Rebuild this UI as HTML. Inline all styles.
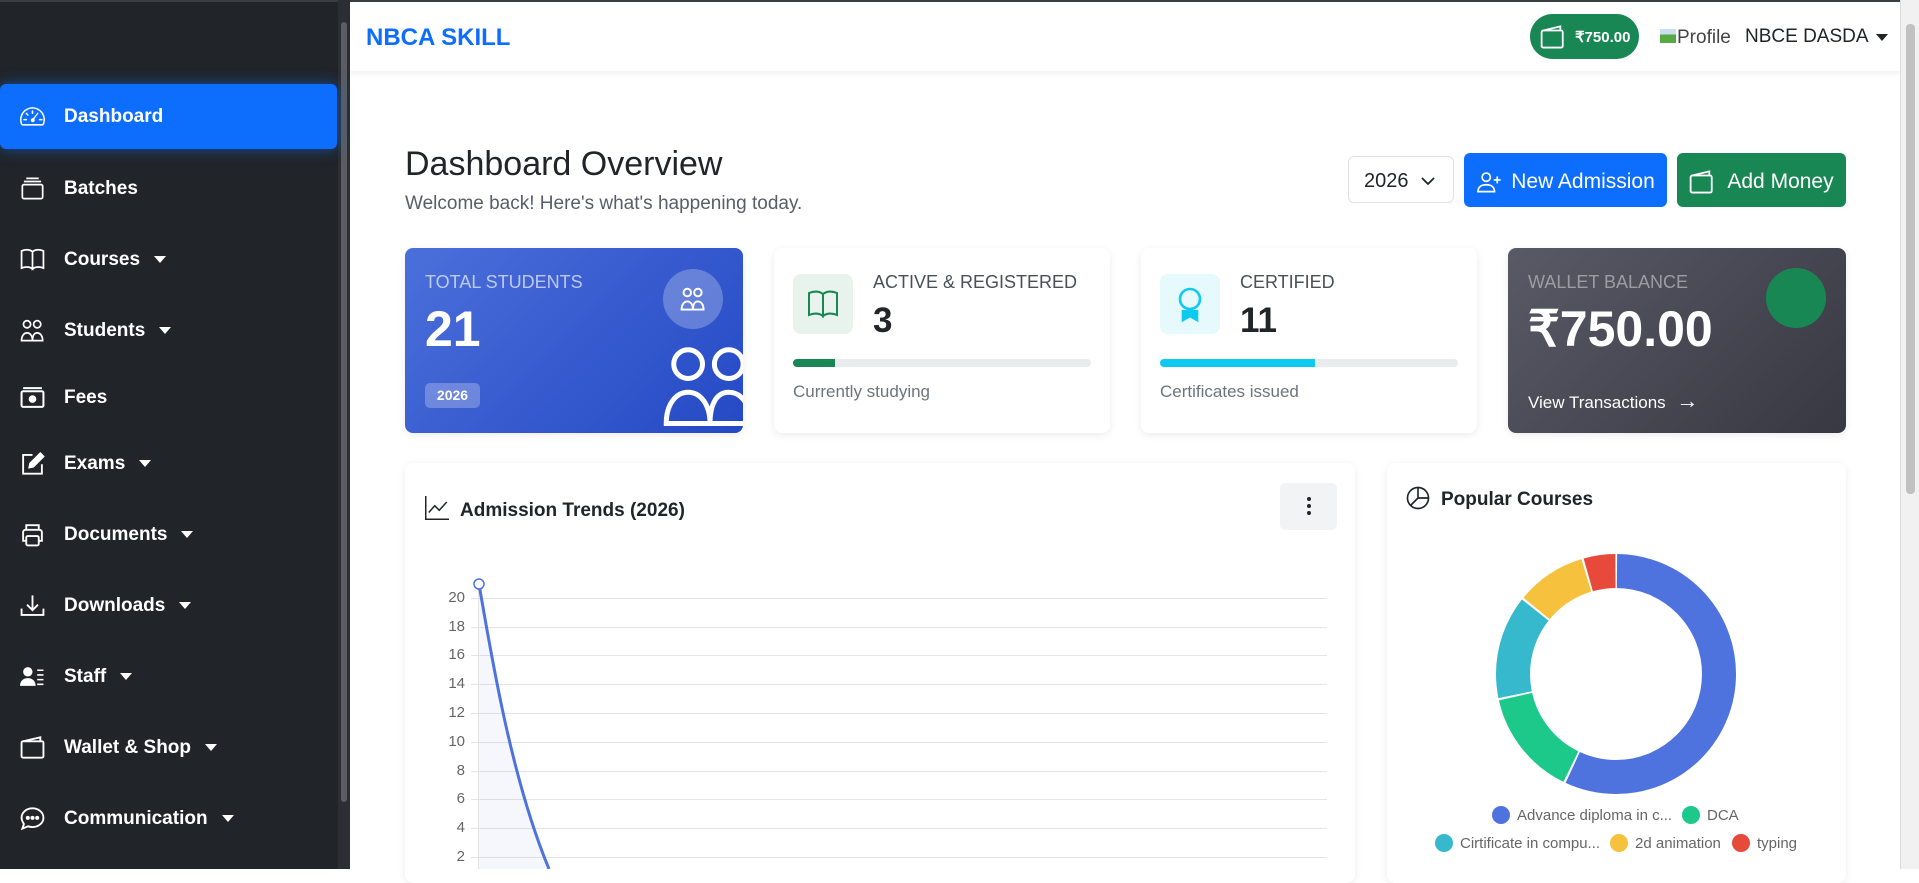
<!DOCTYPE html>
<html><head><meta charset="utf-8"><style>
*{box-sizing:border-box;margin:0;padding:0}
body{width:1919px;height:869px;overflow:hidden;background:#fff;font-family:"Liberation Sans",sans-serif;position:relative}
.sb{position:absolute;left:0;top:0;width:350px;height:869px;background:#212529;border-top:2px solid #3a3d42}
.sbs{position:absolute;left:338px;top:0;width:12px;height:869px;background:#2b2e33}
.sbs i{position:absolute;left:3px;top:22px;width:6px;height:780px;background:#5a5d62;border-radius:3px}
.item{position:absolute;left:0;width:337px;height:65px;color:#fff;font-size:19px;font-weight:bold;display:flex;align-items:center;padding-left:20px}
.item svg{width:25px;height:25px;margin-right:19px;flex:none}
.item.active{background:#0d6efd;border-radius:6px;box-shadow:0 0 14px rgba(13,110,253,.55)}
.car{display:inline-block;width:0;height:0;border-left:6px solid transparent;border-right:6px solid transparent;border-top:7px solid #fff;margin-left:14px}
.hdr{position:absolute;left:350px;top:0;width:1550px;height:71px;background:#fff;border-top:2px solid #3a3d42;box-shadow:0 2px 6px rgba(0,0,0,.07)}
.rsb{position:absolute;left:1900px;top:0;width:19px;height:869px;background:#f1f1f1;border-left:1px solid #ddd}
.rsb i{position:absolute;left:5px;top:24px;width:9px;height:470px;background:#c1c1c1;border-radius:4px}
.card{position:absolute;background:#fff;border-radius:8px;box-shadow:0 2px 8px rgba(0,0,0,.08)}
.lbl{position:absolute;font-size:18px;color:#495057}
.num{position:absolute;font-weight:bold;color:#212529}
.bar{position:absolute;height:8px;background:#e9ecef;border-radius:4px;overflow:hidden}
.bar i{display:block;height:100%}
.sub{position:absolute;font-size:17px;color:#6c757d}
.btn{position:absolute;border-radius:6px;color:#fff;font-size:21px;display:flex;align-items:center;justify-content:center}
.lg{position:absolute;font-size:15px;color:#666;display:flex;align-items:center}
.lg b{width:18px;height:18px;border-radius:50%;display:inline-block;margin-right:7px}
.yl{position:absolute;left:440px;width:25px;text-align:right;font-size:15px;color:#666}
.gl{position:absolute;left:471px;width:856px;height:1px;background:#e5e5e5}
</style></head><body>
<div class="sb"></div>
<div class="sbs"><i></i></div>

<div class="item active" style="top:84px"><svg viewBox="0 0 16 16" fill="#fff"><path d="M8 4a.5.5 0 0 1 .5.5V6a.5.5 0 0 1-1 0V4.5A.5.5 0 0 1 8 4M3.7 5.7a.5.5 0 0 1 .7 0l.9.9a.5.5 0 1 1-.7.7l-.9-.9a.5.5 0 0 1 0-.7M2 10a.5.5 0 0 1 .5-.5H4a.5.5 0 0 1 0 1H2.5A.5.5 0 0 1 2 10m9.6-4.5a.4.4 0 0 1 .1.6l-2.5 3.5a1.3 1.3 0 1 1-.8-.5l2.7-3.4a.4.4 0 0 1 .5-.2M12 10a.5.5 0 0 1 .5-.5H14a.5.5 0 0 1 0 1h-1.5A.5.5 0 0 1 12 10"/><path d="M0 10a8 8 0 1 1 15.5 2.8 1.5 1.5 0 0 1-1.4 1H1.9a1.5 1.5 0 0 1-1.4-1A8 8 0 0 1 0 10m8-7a7 7 0 0 0-6.6 9.4.5.5 0 0 0 .5.4h12.2a.5.5 0 0 0 .5-.4A7 7 0 0 0 8 3"/></svg>Dashboard</div>
<div class="item" style="top:156px"><svg viewBox="0 0 16 16" fill="none" stroke="#fff" stroke-width="1.1"><rect x="1.5" y="5.5" width="13" height="9" rx="1"/><path d="M2.5 3.5h11M4 1.5h8"/></svg>Batches</div>
<div class="item" style="top:227px"><svg viewBox="0 0 16 16" fill="none" stroke="#fff" stroke-width="1.1"><path d="M1 2.5c2.5-1 5-1 7 .5v11c-2-1.5-4.5-1.5-7-.5zM15 2.5c-2.5-1-5-1-7 .5v11c2-1.5 4.5-1.5 7-.5z"/></svg>Courses<span class="car"></span></div>
<div class="item" style="top:298px"><svg viewBox="0 0 16 16" fill="none" stroke="#fff" stroke-width="1.1"><circle cx="4.5" cy="4" r="2.3"/><circle cx="11" cy="4" r="2.3"/><path d="M1 14.5c0-3 1.5-5 3.5-5s3.5 2 3.5 5zM8 14.5c0-3 1-5 3-5s3.5 2 3.5 5z"/></svg>Students<span class="car"></span></div>
<div class="item" style="top:365px"><svg viewBox="0 0 16 16" fill="none" stroke="#fff" stroke-width="1.3"><rect x="1" y="4" width="14" height="10" rx="1"/><path d="M2 2h12"/><circle cx="8" cy="9" r="1.8" fill="#fff"/></svg>Fees</div>
<div class="item" style="top:431px"><svg viewBox="0 0 16 16" fill="none" stroke="#fff" stroke-width="1.2"><path d="M8 2.5H2v12h12v-6"/><path d="M13 1.5l2 2-6.5 6.5-2.5.5.5-2.5z" fill="#fff"/></svg>Exams<span class="car"></span></div>
<div class="item" style="top:502px"><svg viewBox="0 0 16 16" fill="none" stroke="#fff" stroke-width="1.2"><path d="M4 5V2h8v3M4 12H2V6.5A1.5 1.5 0 0 1 3.5 5h9A1.5 1.5 0 0 1 14 6.5V12h-2"/><rect x="4" y="9" width="8" height="6" rx="1"/></svg>Documents<span class="car"></span></div>
<div class="item" style="top:573px"><svg viewBox="0 0 16 16" fill="none" stroke="#fff" stroke-width="1.2"><path d="M1 10v4h14v-4M8 1.5v9M4.5 7.5 8 11l3.5-3.5"/></svg>Downloads<span class="car"></span></div>
<div class="item" style="top:644px"><svg viewBox="0 0 16 16" fill="#fff"><circle cx="5" cy="5" r="3"/><path d="M0 14c0-3 2-5 5-5s5 2 5 5z"/><path d="M11 4h4M11 7h4M11 10h4M11 13h4" stroke="#fff" stroke-width="1"/></svg>Staff<span class="car"></span></div>
<div class="item" style="top:715px"><svg viewBox="0 0 16 16" fill="none" stroke="#fff" stroke-width="1.2"><rect x="1" y="4" width="14" height="10.5" rx="1"/><path d="M2 4 13 1.5V4"/></svg>Wallet &amp; Shop<span class="car"></span></div>
<div class="item" style="top:786px"><svg viewBox="0 0 16 16" fill="none" stroke="#fff" stroke-width="1.2"><path d="M8 1.5c3.9 0 7 2.7 7 6s-3.1 6-7 6c-1 0-2-.2-2.8-.5L1.5 14.5l1-3C1.8 10.4 1 9 1 7.5c0-3.3 3.1-6 7-6z"/><circle cx="5" cy="7.6" r=".7" fill="#fff"/><circle cx="8" cy="7.6" r=".7" fill="#fff"/><circle cx="11" cy="7.6" r=".7" fill="#fff"/></svg>Communication<span class="car"></span></div>

<div class="hdr">
 <div style="position:absolute;left:16px;top:22px;font-size:24px;font-weight:bold;color:#0d6efd">NBCA SKILL</div>
 <div style="position:absolute;left:1180px;top:12px;width:109px;height:45px;border-radius:23px;background:#198754;color:#fff;font-size:15px;font-weight:bold;display:flex;align-items:center;padding-left:10px"><svg width="26" height="26" viewBox="0 0 16 16" fill="none" stroke="#fff" stroke-width="1.1"><rect x="1" y="4" width="13" height="10.5" rx="1"/><path d="M2 4 12.5 1.5V4"/></svg><span style="margin-left:9px">₹750.00</span></div>
 <div style="position:absolute;left:1310px;top:25px;font-size:19px;color:#444"><span style="display:inline-block;width:16px;height:14px;background:linear-gradient(#cde 40%,#5a4 40%);margin-right:1px"></span>Profile</div>
 <div style="position:absolute;left:1395px;top:24px;font-size:19px;color:#212529">NBCE DASDA</div>
 <div style="position:absolute;left:1526px;top:32px;border-left:6px solid transparent;border-right:6px solid transparent;border-top:7px solid #212529"></div>
</div>
<div class="rsb"><i></i></div>

<div style="position:absolute;left:405px;top:145px;font-size:34px;color:#212529">Dashboard Overview</div>
<div style="position:absolute;left:405px;top:193px;font-size:19px;color:#5a5c69">Welcome back! Here's what's happening today.</div>

<div style="position:absolute;left:1348px;top:156px;width:106px;height:47px;background:#fff;border:1px solid #dee2e6;border-radius:6px;font-size:20px;color:#212529;padding:13px 0 0 15px">2026<svg style="position:absolute;left:72px;top:19px" width="14" height="10" viewBox="0 0 14 10" fill="none" stroke="#212529" stroke-width="1.8"><path d="M1 2l6 6 6-6"/></svg></div>
<div class="btn" style="left:1464px;top:153px;width:203px;height:54px;background:#0d6efd;padding-top:4px"><svg width="26" height="22" viewBox="0 0 18 16" fill="none" stroke="#fff" stroke-width="1.2"><circle cx="7" cy="4.5" r="3"/><path d="M1 15c0-3.5 2.5-5 6-5s6 1.5 6 5z"/><path d="M15 4v5M12.5 6.5h5"/></svg><span style="margin-left:9px">New Admission</span></div>
<div class="btn" style="left:1677px;top:153px;width:169px;height:54px;background:#198754;padding-top:4px"><svg width="26" height="26" viewBox="0 0 16 16" fill="none" stroke="#fff" stroke-width="1.1"><rect x="1" y="4" width="13" height="10.5" rx="1"/><path d="M2 4 12.5 1.5V4"/></svg><span style="margin-left:12px">Add Money</span></div>

<div class="card" style="left:405px;top:248px;width:338px;height:185px;background:linear-gradient(135deg,#4b6fda,#2549c4);overflow:hidden">
 <div class="lbl" style="left:20px;top:24px;color:rgba(255,255,255,.65)">TOTAL STUDENTS</div>
 <div class="num" style="left:20px;top:52px;font-size:50px;color:#fff">21</div>
 <div style="position:absolute;left:20px;top:135px;width:55px;height:25px;border-radius:5px;background:rgba(255,255,255,.25);color:#fff;font-size:14px;font-weight:bold;text-align:center;line-height:25px">2026</div>
 <div style="position:absolute;left:258px;top:21px;width:60px;height:60px;border-radius:50%;background:rgba(255,255,255,.25)"></div>
 <svg style="position:absolute;left:274px;top:38px" width="28" height="26" viewBox="0 0 16 16" fill="none" stroke="#fff" stroke-width="1.2"><circle cx="4.5" cy="4" r="2.3"/><circle cx="11" cy="4" r="2.3"/><path d="M1 14.5c0-3 1.5-5 3.5-5s3.5 2 3.5 5zM8 14.5c0-3 1-5 3-5s3.5 2 3.5 5z"/></svg>
 <svg style="position:absolute;left:255px;top:97px" width="100" height="82" viewBox="0 0 16 13" fill="none" stroke="#fff" stroke-width=".8"><circle cx="4.5" cy="3" r="2.3"/><circle cx="11" cy="3" r="2.3"/><path d="M1 12.5c0-3 1.5-5 3.5-5s3.5 2 3.5 5zM8 12.5c0-3 1-5 3-5s3.5 2 3.5 5z"/></svg>
</div>
<div class="card" style="left:774px;top:248px;width:336px;height:185px">
 <div style="position:absolute;left:19px;top:26px;width:60px;height:60px;border-radius:8px;background:#e8f3ee"></div>
 <svg style="position:absolute;left:33px;top:40px" width="32" height="32" viewBox="0 0 16 16" fill="none" stroke="#198754" stroke-width="1"><path d="M1 2.5c2.5-1 5-1 7 .5v11c-2-1.5-4.5-1.5-7-.5zM15 2.5c-2.5-1-5-1-7 .5v11c2-1.5 4.5-1.5 7-.5z"/></svg>
 <div class="lbl" style="left:99px;top:24px">ACTIVE &amp; REGISTERED</div>
 <div class="num" style="left:99px;top:53px;font-size:35px">3</div>
 <div class="bar" style="left:19px;top:111px;width:298px"><i style="width:14%;background:#198754"></i></div>
 <div class="sub" style="left:19px;top:134px">Currently studying</div>
</div>
<div class="card" style="left:1141px;top:248px;width:336px;height:185px">
 <div style="position:absolute;left:19px;top:26px;width:60px;height:60px;border-radius:8px;background:#e6f9fd"></div>
 <svg style="position:absolute;left:35px;top:38px" width="28" height="36" viewBox="0 0 14 18" fill="none" stroke="#0dcaf0" stroke-width="1.3"><circle cx="7" cy="6.5" r="5"/><path d="M3.5 12v5l3.5-2 3.5 2v-5" fill="#0dcaf0"/></svg>
 <div class="lbl" style="left:99px;top:24px">CERTIFIED</div>
 <div class="num" style="left:99px;top:53px;font-size:35px">11</div>
 <div class="bar" style="left:19px;top:111px;width:298px"><i style="width:52%;background:#0dcaf0"></i></div>
 <div class="sub" style="left:19px;top:134px">Certificates issued</div>
</div>
<div class="card" style="left:1508px;top:248px;width:338px;height:185px;background:linear-gradient(135deg,#595a66,#373842)">
 <div class="lbl" style="left:20px;top:24px;color:#9c9ca4">WALLET BALANCE</div>
 <div class="num" style="left:20px;top:52px;font-size:50px;color:#fff">₹750.00</div>
 <div style="position:absolute;left:258px;top:20px;width:60px;height:60px;border-radius:50%;background:#198754"></div>
 <div style="position:absolute;left:20px;top:140px;font-size:17px;color:#fff">View Transactions <span style="font-size:22px;margin-left:6px">→</span></div>
</div>

<div class="card" style="left:405px;top:463px;width:950px;height:420px"></div>
<svg style="position:absolute;left:425px;top:496px" width="24" height="24" viewBox="0 0 16 16" fill="none" stroke="#212529" stroke-width="1"><path d="M.5 0v15.5H16M2.5 11l4-4.5 3 3 5-5.5"/></svg>
<div style="position:absolute;left:460px;top:500px;font-size:19px;font-weight:bold;color:#212529">Admission Trends (2026)</div>
<div style="position:absolute;left:1280px;top:483px;width:57px;height:47px;border-radius:5px;background:#f1f3f5"><span style="position:absolute;left:27px;top:14px;width:4px;height:4px;border-radius:2px;background:#212529;box-shadow:0 7px 0 #212529,0 14px 0 #212529"></span></div>

<div class="gl" style="top:598px"></div><div class="gl" style="top:627px"></div><div class="gl" style="top:655px"></div><div class="gl" style="top:684px"></div><div class="gl" style="top:713px"></div><div class="gl" style="top:742px"></div><div class="gl" style="top:771px"></div><div class="gl" style="top:799px"></div><div class="gl" style="top:828px"></div><div class="gl" style="top:857px"></div>
<div style="position:absolute;left:478px;top:585px;width:1px;height:284px;background:#e5e5e5"></div>
<div class="yl" style="top:589px">20</div><div class="yl" style="top:618px">18</div><div class="yl" style="top:646px">16</div><div class="yl" style="top:675px">14</div><div class="yl" style="top:704px">12</div><div class="yl" style="top:733px">10</div><div class="yl" style="top:762px">8</div><div class="yl" style="top:790px">6</div><div class="yl" style="top:819px">4</div><div class="yl" style="top:848px">2</div>
<svg style="position:absolute;left:0;top:0" width="1919" height="869">
 <path d="M479 584 C492 660 512 780 549 869 L479 869Z" fill="rgba(78,115,223,.06)"/>
 <path d="M479 584 C492 660 512 780 549 869" fill="none" stroke="#4e73df" stroke-width="3"/>
 <circle cx="479" cy="584" r="5" fill="#fff" stroke="#4e73df" stroke-width="1.5"/>
</svg>

<div class="card" style="left:1387px;top:463px;width:459px;height:420px"></div>
<svg style="position:absolute;left:1406px;top:486px" width="24" height="24" viewBox="0 0 16 16" fill="none" stroke="#212529" stroke-width="1.1"><circle cx="8" cy="8" r="7"/><path d="M8 1v7h7M8 8l-5 5"/></svg>
<div style="position:absolute;left:1441px;top:489px;font-size:19px;font-weight:bold;color:#212529">Popular Courses</div>
<svg style="position:absolute;left:1496px;top:554px" width="240" height="240" viewBox="0 0 240 240">
 <g transform="rotate(-90 120 120)" fill="none" stroke-width="34">
  <circle cx="120" cy="120" r="103" stroke="#4e73df" stroke-dasharray="367.1 280.1" stroke-dashoffset="-1"/>
  <circle cx="120" cy="120" r="103" stroke="#1cc88a" stroke-dasharray="92.2 555" stroke-dashoffset="-370.1"/>
  <circle cx="120" cy="120" r="103" stroke="#36b9cc" stroke-dasharray="89.9 557.3" stroke-dashoffset="-464.3"/>
  <circle cx="120" cy="120" r="103" stroke="#f6c23e" stroke-dasharray="60.6 586.6" stroke-dashoffset="-556.2"/>
  <circle cx="120" cy="120" r="103" stroke="#e74a3b" stroke-dasharray="27.5 619.7" stroke-dashoffset="-618.8"/>
 </g>
</svg>
<div class="lg" style="left:1492px;top:806px"><b style="background:#4e73df"></b>Advance diploma in c...</div>
<div class="lg" style="left:1682px;top:806px"><b style="background:#1cc88a"></b>DCA</div>
<div class="lg" style="left:1435px;top:834px"><b style="background:#36b9cc"></b>Cirtificate in compu...</div>
<div class="lg" style="left:1610px;top:834px"><b style="background:#f6c23e"></b>2d animation</div>
<div class="lg" style="left:1732px;top:834px"><b style="background:#e74a3b"></b>typing</div>
</body></html>
